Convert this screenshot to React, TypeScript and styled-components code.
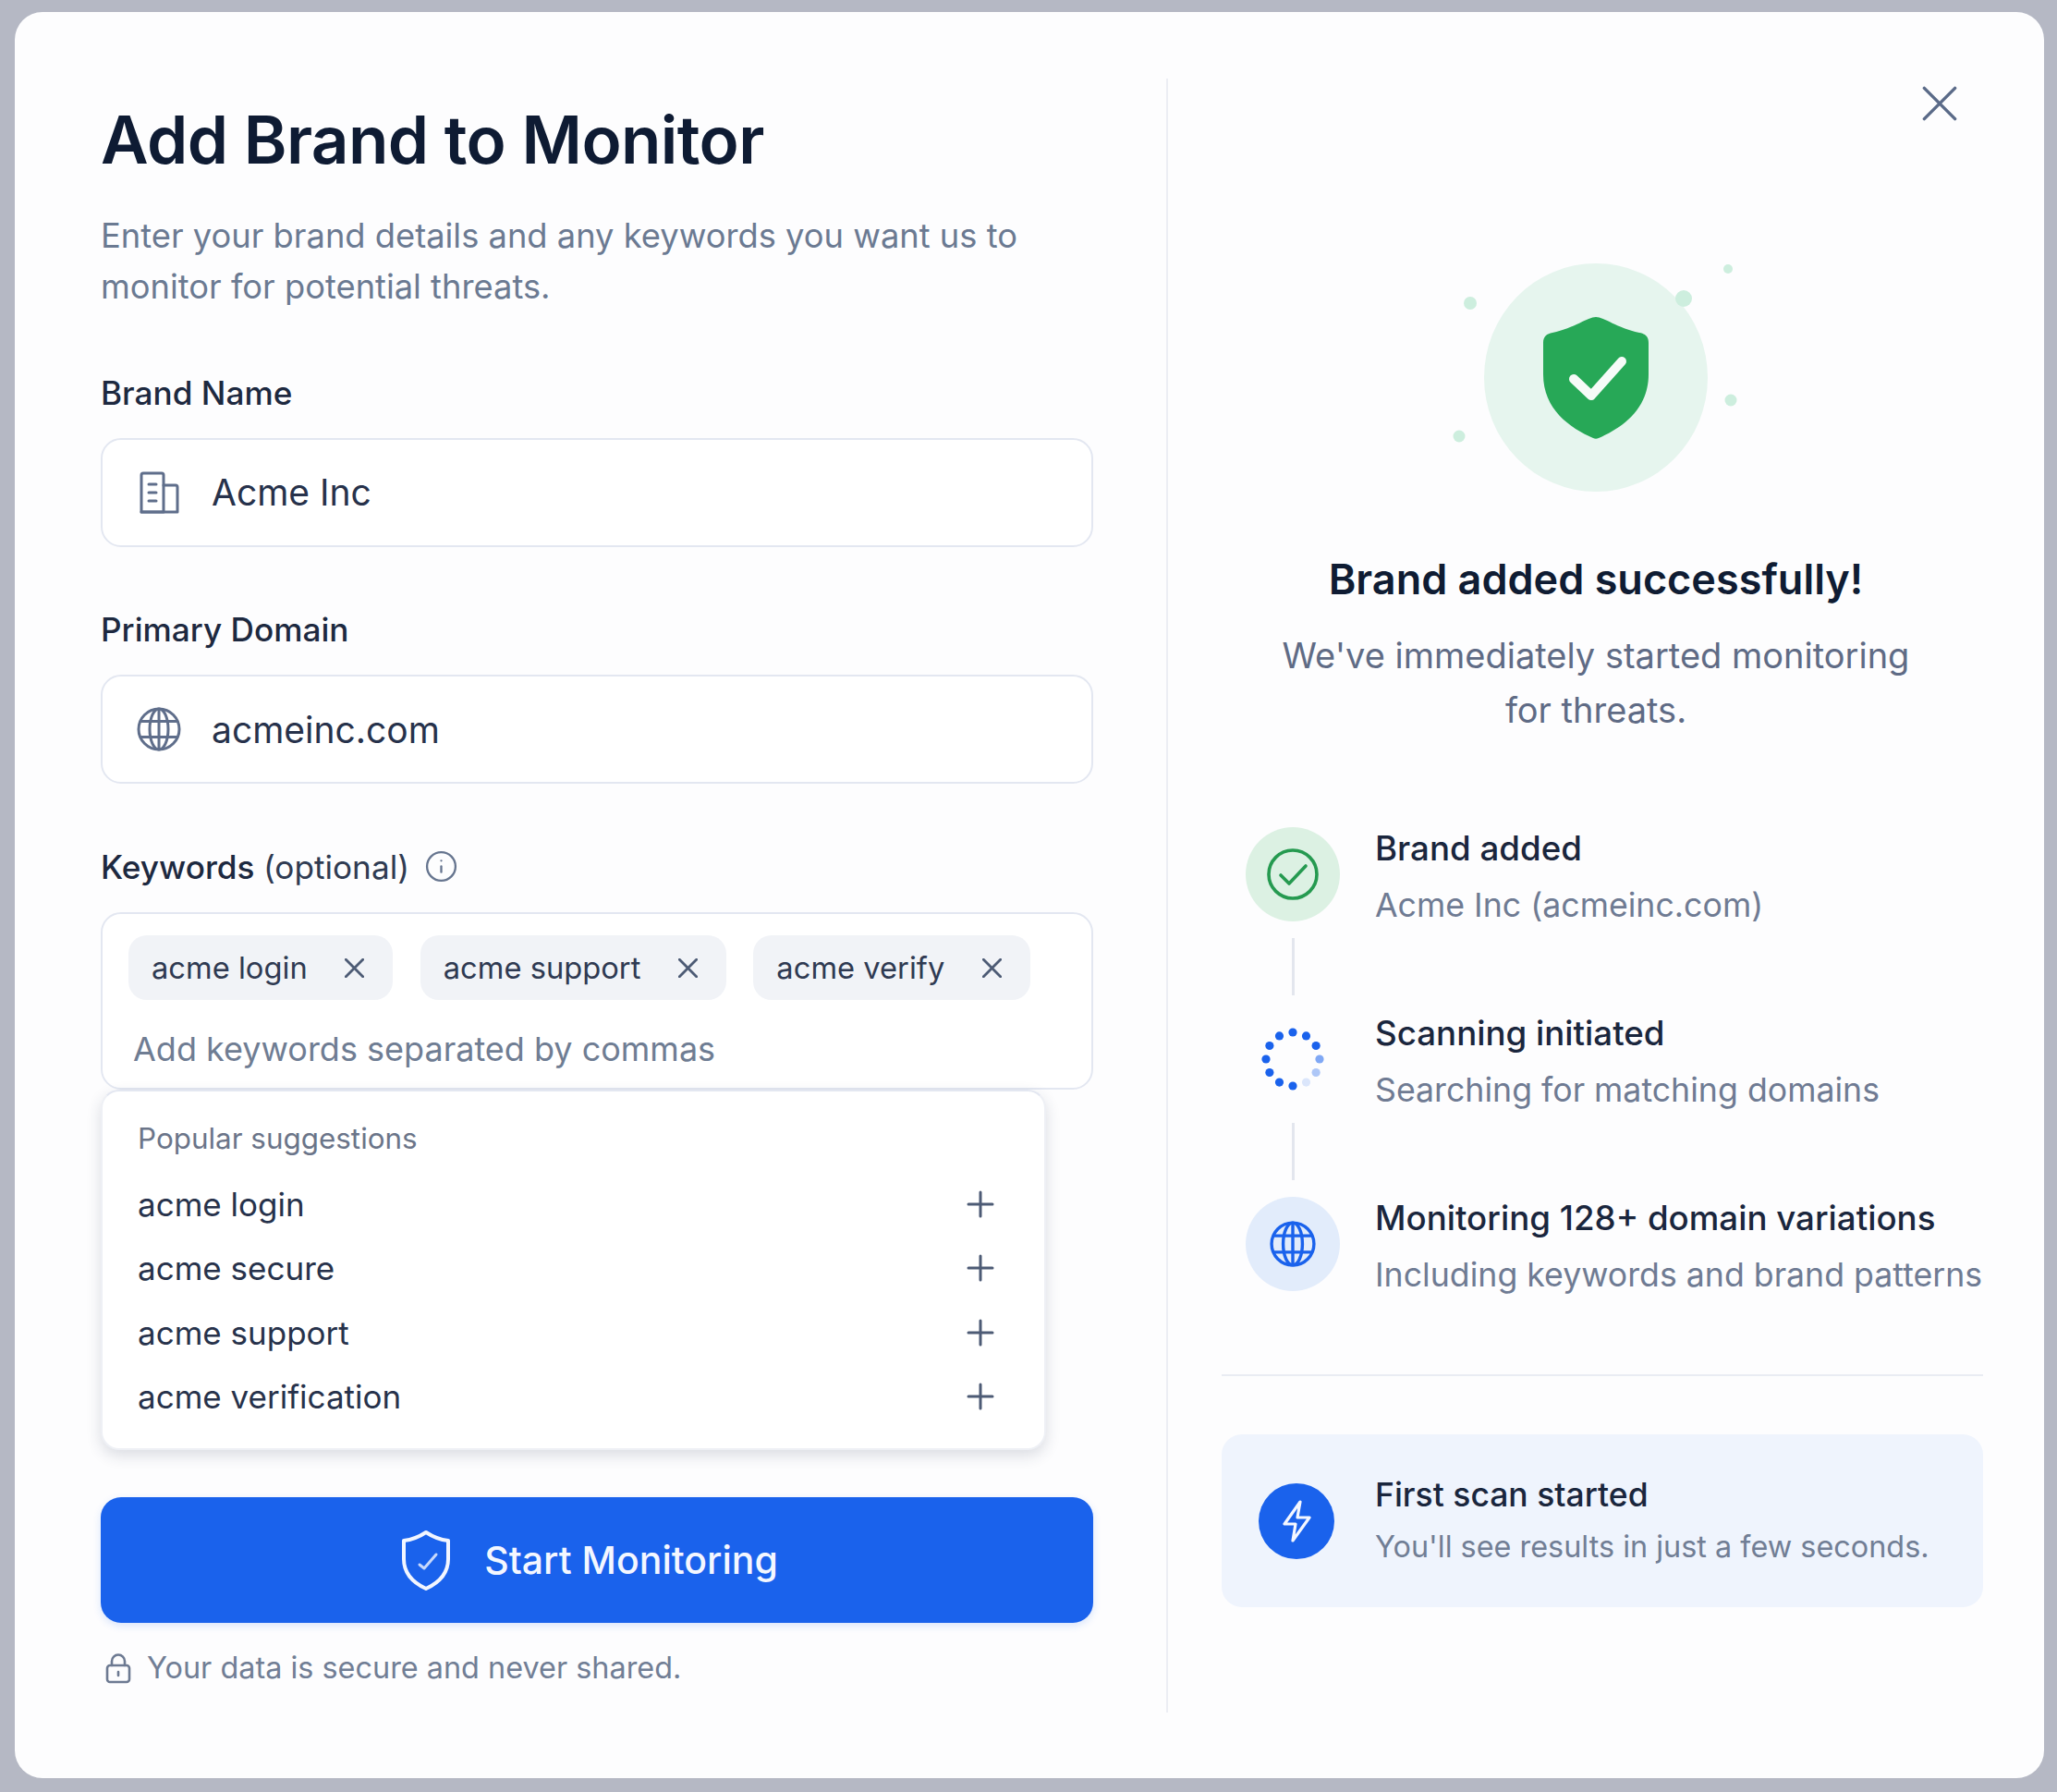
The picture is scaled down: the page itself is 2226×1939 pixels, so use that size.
import styled, { createGlobalStyle } from "styled-components";
import { Info } from "lucide-react";

const GlobalStyle = createGlobalStyle`
	* {
		box-sizing: border-box;
	}
	html, body {
		margin: 0;
		padding: 0;
		background: #b5b8c4;
	}
	body {
		font-family: Inter, "Liberation Sans", sans-serif;
		-webkit-font-smoothing: antialiased;
	}
`;

const keywords = ["acme login", "acme support", "acme verify"];
const suggestions = ["acme login", "acme secure", "acme support", "acme verification"];

// px stroke stays the same whatever the drawn size is
function Cross({ size, stroke, color }: { size: number; stroke: number; color: string }) {
	return (
		<svg width={size} height={size} viewBox="0 0 24 24" fill="none" stroke={color} strokeWidth={(stroke * 24) / size} strokeLinecap="round">
			<path d="M1.5 1.5 22.5 22.5M22.5 1.5 1.5 22.5" />
		</svg>
	);
}

function PlusMark() {
	return (
		<svg width={30} height={30} viewBox="0 0 30 30" fill="none" stroke="#4d5b75" strokeWidth={3} strokeLinecap="round">
			<path d="M15 2v26M2 15h26" />
		</svg>
	);
}

function BuildingIcon() {
	return (
		<svg width={44} height={46} viewBox="0 0 44 46" fill="none" stroke="#5f6e8b" strokeWidth={3} strokeLinejoin="round" strokeLinecap="round">
			<path d="M3 44V4a2 2 0 0 1 2-2h20a2 2 0 0 1 2 2v40z" />
			<path d="M27 15h13a2 2 0 0 1 2 2v27H3" />
			<path d="M11 14h8M11 23h8M11 32h8" />
		</svg>
	);
}

function GlobeIcon({ size, color, stroke }: { size: number; color: string; stroke: number }) {
	return (
		<svg width={size} height={size} viewBox="0 0 48 48" fill="none" stroke={color} strokeWidth={(stroke * 48) / size}>
			<circle cx="24" cy="24" r="22" />
			<ellipse cx="24" cy="24" rx="10" ry="22" />
			<path d="M24 2v44M4.5 15.5h39M4.5 32.5h39" />
		</svg>
	);
}

function LockIcon() {
	return (
		<svg width={28} height={33} viewBox="0 0 28 33" fill="none" stroke="#6d7a92" strokeWidth={2.6} strokeLinecap="round">
			<rect x="2" y="13" width="24" height="18" rx="3" />
			<path d="M7 13V8.5a7 7 0 0 1 14 0V13M14 20v4" />
		</svg>
	);
}

function ButtonShield() {
	return (
		<svg width={54} height={67} viewBox="0 0 54 67" fill="none" stroke="#f2f6ff" strokeWidth={4} strokeLinejoin="round" strokeLinecap="round">
			<path d="M27 3c6 4 15 8 24 9v20c0 16-11 26-24 32C14 58 3 48 3 32V12c9-1 18-5 24-9z" />
			<path d="M20 38l5 4 13-15" strokeWidth={3} opacity={0.8} />
		</svg>
	);
}

function HeroShield() {
	return (
		<svg width={114} height={132} viewBox="0 0 114 132">
			<path
				fill="#27a857"
				d="M57 0C66 0 80 12 104 17c6 1 10 4 10 11v34c0 38-29 58-54 69-2 1-4 1-6 0C29 120 0 100 0 62V28c0-7 4-10 10-11C34 12 48 0 57 0z"
			/>
			<path d="M33 67l19 18 33-37" fill="none" stroke="#f6fbf8" strokeWidth={10} strokeLinecap="round" strokeLinejoin="round" />
		</svg>
	);
}

function CheckCircleIcon() {
	return (
		<svg width={56} height={56} viewBox="0 0 56 56" fill="none" stroke="#259a50" strokeWidth={3.6} strokeLinecap="round" strokeLinejoin="round">
			<circle cx="28" cy="28" r="26" />
			<path d="M15 29l9 9 18-19" />
		</svg>
	);
}

function BoltIcon() {
	return (
		<svg width={32} height={46} viewBox="0 0 32 46" fill="none" stroke="#f4f7ff" strokeWidth={3.2} strokeLinejoin="round" strokeLinecap="round">
			<path d="M20 2 3 26h12l-3 18 18-25H17z" />
		</svg>
	);
}

// twelve dots, the last ones before the bottom fade out
const spinnerOpacity = [1, 1, 1, 0.55, 0.35, 0.15, 1, 1, 1, 1, 1, 1];

function SpinnerDots() {
	return (
		<svg width={78} height={78} viewBox="-39 -39 78 78">
			{spinnerOpacity.map((opacity, i) => {
				const angle = ((i * 30 - 90) * Math.PI) / 180;
				return <circle key={i} cx={Math.cos(angle) * 29} cy={Math.sin(angle) * 29} r={4.6} fill="#1a62ec" opacity={opacity} />;
			})}
		</svg>
	);
}

const sparks = [
	{ x: -15, y: 43, size: 14 },
	{ x: 264, y: 6, size: 10 },
	{ x: 216, y: 38, size: 18 },
	{ x: 267, y: 148, size: 13 },
	{ x: -27, y: 187, size: 13 },
];

export default function App() {
	return (
		<Page>
			<GlobalStyle />
			<Modal>
				<CloseButton>
					<Cross size={38} stroke={3.4} color="#5a6a88" />
				</CloseButton>

				<FormPane>
					<Title>Add Brand to Monitor</Title>
					<Description>
						Enter your brand details and any keywords you want us to
						<br />
						monitor for potential threats.
					</Description>

					<Fields>
						<Field>
							<Label>Brand Name</Label>
							<InputBox>
								<InputIcon>
									<BuildingIcon />
								</InputIcon>
								<InputText>Acme Inc</InputText>
							</InputBox>
						</Field>
						<Field>
							<Label>Primary Domain</Label>
							<InputBox>
								<InputIcon>
									<GlobeIcon size={48} color="#5f6e8b" stroke={3} />
								</InputIcon>
								<InputText>acmeinc.com</InputText>
							</InputBox>
						</Field>
						<Field>
							<Label>
								Keywords <Optional>(optional)</Optional>
								<Info size={37} color="#66758f" strokeWidth={1.5} />
							</Label>
							<div>
								<KeywordBox>
									<ChipRow>
										{keywords.map((k) => (
											<Chip key={k}>
												{k}
												<Cross size={21} stroke={2.8} color="#4d5b75" />
											</Chip>
										))}
									</ChipRow>
									<Placeholder>Add keywords separated by commas</Placeholder>
								</KeywordBox>
								<Suggestions>
									<SuggestionsTitle>Popular suggestions</SuggestionsTitle>
									{suggestions.map((s) => (
										<SuggestionRow key={s}>
											{s}
											<PlusMark />
										</SuggestionRow>
									))}
								</Suggestions>
							</div>
						</Field>
					</Fields>

					<SubmitButton>
						<ButtonShield />
						Start Monitoring
					</SubmitButton>
					<SecureNote>
						<LockIcon />
						Your data is secure and never shared.
					</SecureNote>
				</FormPane>

				<PaneDivider />

				<StatusPane>
					<Hero>
						<HeroCircle>
							{sparks.map((s) => (
								<Spark key={s.x} $x={s.x} $y={s.y} $size={s.size} />
							))}
							<HeroShield />
						</HeroCircle>
						<HeroTitle>Brand added successfully!</HeroTitle>
						<HeroText>
							We've immediately started monitoring
							<br />
							for threats.
						</HeroText>
					</Hero>

					<Steps>
						<Step>
							<StepRail>
								<StepIcon $bg="#dcf1e3">
									<CheckCircleIcon />
								</StepIcon>
								<Connector />
							</StepRail>
							<StepText>
								<StepTitle>Brand added</StepTitle>
								<StepSub>Acme Inc (acmeinc.com)</StepSub>
							</StepText>
						</Step>
						<Step>
							<StepRail>
								<StepIcon $bg="transparent">
									<SpinnerDots />
								</StepIcon>
								<Connector />
							</StepRail>
							<StepText>
								<StepTitle>Scanning initiated</StepTitle>
								<StepSub>Searching for matching domains</StepSub>
							</StepText>
						</Step>
						<Step>
							<StepRail>
								<StepIcon $bg="#e2ecfb">
									<GlobeIcon size={50} color="#1a62ec" stroke={3.4} />
								</StepIcon>
							</StepRail>
							<StepText>
								<StepTitle>Monitoring 128+ domain variations</StepTitle>
								<StepSub>Including keywords and brand patterns</StepSub>
							</StepText>
						</Step>
					</Steps>

					<Rule />

					<Banner>
						<BannerIcon>
							<BoltIcon />
						</BannerIcon>
						<div>
							<BannerTitle>First scan started</BannerTitle>
							<BannerText>You'll see results in just a few seconds.</BannerText>
						</div>
					</Banner>
				</StatusPane>
			</Modal>
		</Page>
	);
}

const Page = styled.div`
	width: 100%;
	height: 100vh;
	padding: 13px 14px 15px 16px;
`;

const Modal = styled.div`
	position: relative;
	display: flex;
	height: 100%;
	background-color: #fdfdfe;
	border-radius: 30px;
`;

const CloseButton = styled.div`
	position: absolute;
	top: 80px;
	right: 94px;
	display: flex;
`;

const FormPane = styled.div`
	flex: none;
	width: 1246px;
	padding: 98px 79px 0 93px;
`;

const Title = styled.h1`
	margin: 0;
	font-size: 71px;
	line-height: 80px;
	font-weight: 600;
	letter-spacing: -0.6px;
	color: #0e1b33;
`;

const Description = styled.p`
	margin: 37.4px 0 0;
	font-size: 36.3px;
	line-height: 55px;
	color: #6b7a92;
`;

const Fields = styled.div`
	display: flex;
	flex-direction: column;
	gap: 67.5px;
	margin-top: 64.2px;
`;

const Field = styled.div`
	display: flex;
	flex-direction: column;
	gap: 27.2px;
`;

const Label = styled.div`
	display: flex;
	align-items: center;
	height: 44px;
	font-size: 35.2px;
	line-height: 44px;
	font-weight: 500;
	color: #1d2940;
	white-space: pre;

	svg {
		margin-left: 16px;
	}
`;

const Optional = styled.span`
	font-weight: 400;
	color: #2f3b52;
`;

const InputBox = styled.div`
	display: flex;
	align-items: center;
	height: 118px;
	padding-left: 37px;
	background-color: #fff;
	border: 2px solid #e3e7f1;
	border-radius: 22px;
`;

const InputIcon = styled.span`
	display: flex;
	justify-content: center;
	width: 48px;
	margin-right: 33px;
`;

const InputText = styled.span`
	font-size: 39px;
	color: #27324b;
`;

const KeywordBox = styled.div`
	height: 192px;
	padding: 23px 27px 0 28px;
	background-color: #fff;
	border: 2px solid #e3e7f1;
	border-radius: 22px;
`;

const ChipRow = styled.div`
	display: flex;
	gap: 29.5px;
`;

const Chip = styled.div`
	display: flex;
	align-items: center;
	gap: 40.5px;
	height: 70px;
	padding: 0 31px 0 25px;
	font-size: 32.7px;
	color: #2f3a52;
	background-color: #f1f3f7;
	border-radius: 20px;
`;

const Placeholder = styled.div`
	margin: 31px 0 0 5px;
	font-size: 36px;
	line-height: 44px;
	color: #6f7d93;
`;

const Suggestions = styled.div`
	width: 1023px;
	height: 390px;
	padding: 31px 54px 0 38px;
	background-color: #fff;
	border: 2px solid #eef0f5;
	border-top-color: #e3e7f1;
	border-radius: 20px;
	box-shadow: 0 6px 16px rgba(40, 50, 80, 0.16);
`;

const SuggestionsTitle = styled.div`
	margin-bottom: 16px;
	font-size: 31.4px;
	line-height: 40px;
	color: #6b7589;
`;

const SuggestionRow = styled.div`
	display: flex;
	align-items: center;
	justify-content: space-between;
	height: 69.5px;
	font-size: 35px;
	color: #27324b;
`;

const SubmitButton = styled.div`
	display: flex;
	align-items: center;
	justify-content: center;
	gap: 36px;
	height: 136px;
	margin-top: 51px;
	padding-right: 16px;
	font-size: 41px;
	font-weight: 500;
	color: #f4f7ff;
	background-color: #1a62ec;
	border-radius: 22px;
	box-shadow: 0 3px 8px rgba(26, 98, 236, 0.16);
`;

const SecureNote = styled.div`
	display: flex;
	align-items: center;
	gap: 17px;
	margin: 27px 0 0 5px;
	font-size: 32.4px;
	line-height: 44px;
	color: #717e95;
`;

const PaneDivider = styled.div`
	flex: none;
	width: 2px;
	height: 1768px;
	margin-top: 72px;
	background-color: #eceef4;
`;

const StatusPane = styled.div`
	flex: 1;
	padding: 272px 66px 0 58px;
`;

const Hero = styled.div`
	display: flex;
	flex-direction: column;
	align-items: center;
	padding-right: 14px;
	text-align: center;
`;

const HeroCircle = styled.div`
	position: relative;
	display: flex;
	align-items: center;
	justify-content: center;
	width: 242px;
	height: 247px;
	background-color: #e6f5ee;
	border-radius: 50%;
`;

const Spark = styled.span<{ $x: number; $y: number; $size: number }>`
	position: absolute;
	left: ${(p) => p.$x}px;
	top: ${(p) => p.$y}px;
	width: ${(p) => p.$size}px;
	height: ${(p) => p.$size}px;
	background-color: #cdeede;
	border-radius: 50%;
	transform: translate(-50%, -50%);
`;

const HeroTitle = styled.h2`
	margin: 65px 0 0;
	font-size: 45px;
	line-height: 60px;
	font-weight: 600;
	color: #0f1c33;
`;

const HeroText = styled.p`
	margin: 23px 0 0;
	font-size: 38px;
	line-height: 59px;
	color: #5f6b85;
`;

const Steps = styled.div`
	margin-top: 97px;
	padding-left: 26px;
`;

const Step = styled.div`
	display: flex;
	gap: 38px;
`;

const StepRail = styled.div`
	display: flex;
	flex-direction: column;
	align-items: center;
	flex: none;
	width: 102px;
`;

const StepIcon = styled.div<{ $bg: string }>`
	display: flex;
	align-items: center;
	justify-content: center;
	width: 102px;
	height: 102px;
	background-color: ${(p) => p.$bg};
	border-radius: 50%;
`;

const Connector = styled.div`
	width: 3px;
	height: 62px;
	margin: 18px 0;
	background-color: #e3e6ee;
`;

const StepText = styled.div`
	display: flex;
	flex-direction: column;
	gap: 11px;
	margin-top: -2px;
`;

const StepTitle = styled.div`
	font-size: 36.7px;
	line-height: 50px;
	font-weight: 500;
	color: #1a263d;
	white-space: nowrap;
`;

const StepSub = styled.div`
	font-size: 35.7px;
	line-height: 50px;
	color: #6f7b93;
	white-space: nowrap;
`;

const Rule = styled.div`
	height: 2px;
	margin-top: 83px;
	background-color: #e9ecf3;
`;

const Banner = styled.div`
	display: flex;
	align-items: center;
	gap: 44px;
	height: 187px;
	margin-top: 63px;
	padding-left: 40px;
	background-color: #eff4fd;
	border-radius: 22px;
`;

const BannerIcon = styled.div`
	display: flex;
	align-items: center;
	justify-content: center;
	width: 82px;
	height: 82px;
	background-color: #1a62ec;
	border-radius: 50%;
`;

const BannerTitle = styled.div`
	font-size: 35.5px;
	line-height: 46px;
	font-weight: 500;
	color: #1a263d;
`;

const BannerText = styled.div`
	margin-top: 10px;
	font-size: 32.4px;
	line-height: 46px;
	color: #717e95;
`;
